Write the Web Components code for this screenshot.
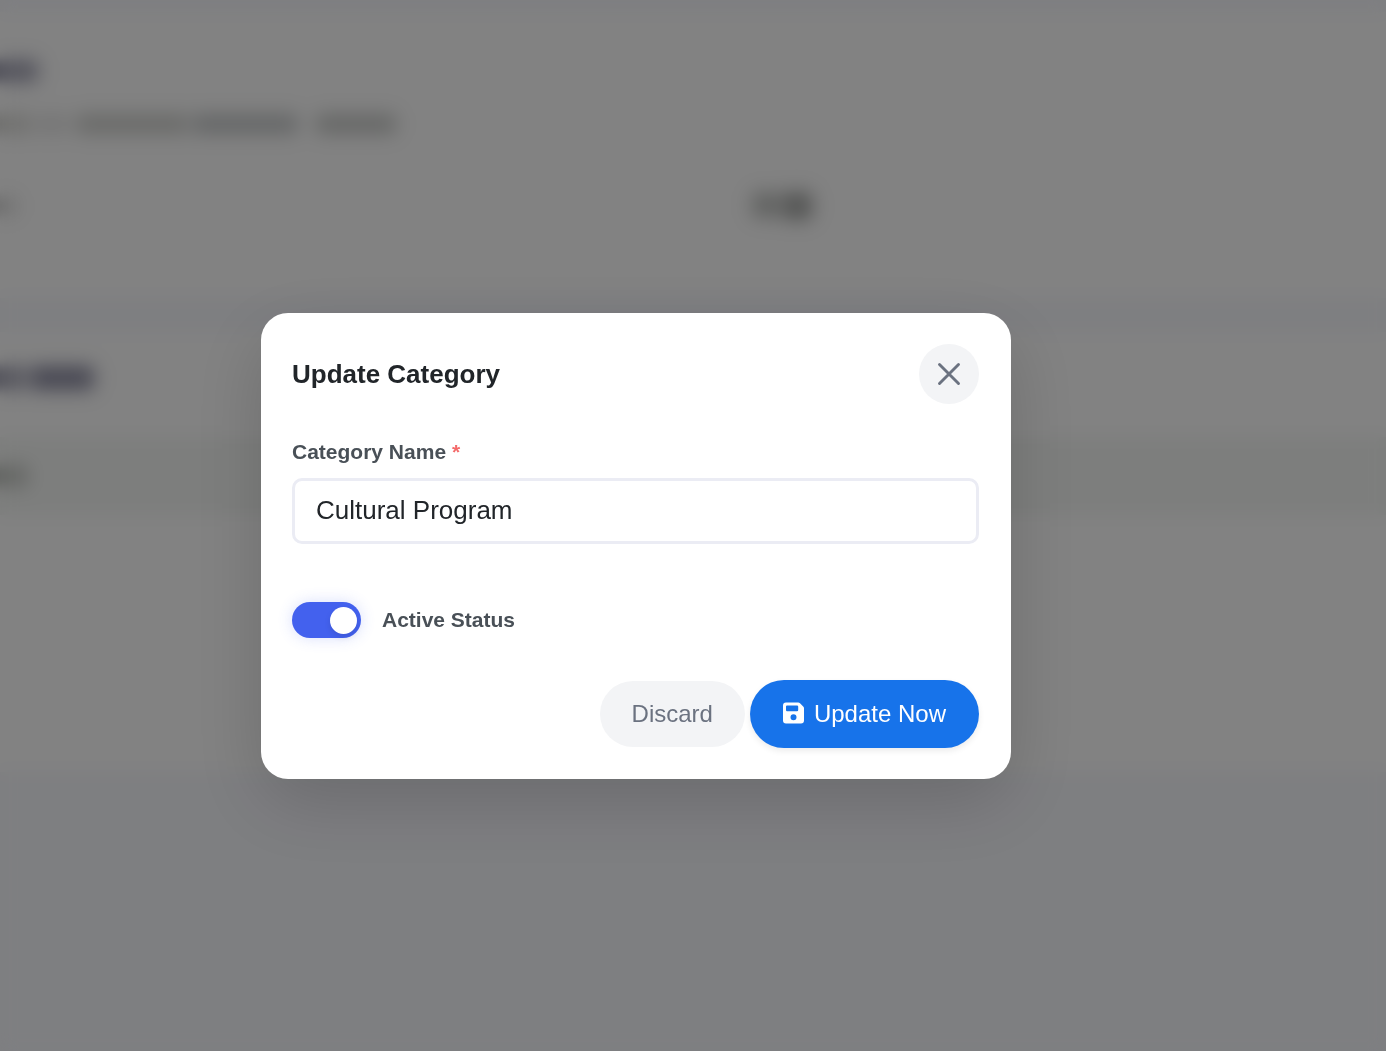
<!DOCTYPE html>
<html lang="en">
<head>
<meta charset="utf-8">
<meta name="viewport" content="width=device-width, initial-scale=1">
<title>Update Category</title>
<style>
  body { margin: 0; min-height: 100vh; background: #f8f9fe; font-family: "Liberation Sans", Arial, sans-serif; color: #212529; }
</style>
</head>
<body>
<category-page></category-page>
<modal-overlay>
  <modal-dialog heading="Update Category">
    <text-field label="Category Name" value="Cultural Program" required></text-field>
    <toggle-switch label="Active Status" checked></toggle-switch>
    <pill-button slot="actions">Discard</pill-button>
    <pill-button slot="actions" variant="primary"><save-icon slot="icon"></save-icon>Update Now</pill-button>
  </modal-dialog>
</modal-overlay>
<script>
class BaseElement extends HTMLElement {
  constructor() { super(); this.attachShadow({ mode: "open" }); }
  connectedCallback() {
    this.shadowRoot.innerHTML = "<style>*{box-sizing:border-box}" + this.css() + "</style>" + this.html();
  }
  css() { return ""; }
  html() { return ""; }
}

/* Placeholder panels of the page under the dialog */
customElements.define("category-page", class extends BaseElement {
  css() { return `
    :host { display: flex; flex-direction: column; gap: 34px; padding-top: 12px; overflow-x: clip; }
    section { background: #fff; display: flex; flex-direction: column; }
    i { display: block; border-radius: 4px; filter: blur(6px); }
    .title, .words, .name, .fields > i, .row > i { margin-left: -20px; }
    .form { height: 286px; padding-top: 48px; gap: 42px; }
    .title { width: 58px; height: 22px; background: #a2a2b4; }
    .words { display: flex; gap: 4px; margin-top: -10px; }
    .words i { height: 20px; background: #d0d1d0; }
    .words i:nth-child(1) { width: 52px; background: #dcdcd9; }
    .words i:nth-child(2) { width: 32px; background: #e6e6e6; }
    .words i:nth-child(3) { width: 112px; margin-left: 4px; background: #cfd0cd; }
    .words i:nth-child(4) { width: 106px; background: #c6c9ca; }
    .words i:nth-child(5) { width: 80px; margin-left: 14px; background: #c8cac8; }
    .fields { display: grid; grid-template-columns: 54% 46%; align-items: center; margin-top: 16px; }
    .fields i { width: 36px; height: 18px; background: #dadada; }
    .fields div { display: flex; gap: 2px; padding-left: 4px; }
    .fields div i { width: 28px; height: 26px; background: #c0c2c0; }
    .fields div i + i { width: 30px; height: 28px; background: #a4a6a4; }
    .list { height: 440px; padding-top: 34px; }
    .name { display: flex; gap: 4px; margin-bottom: 47px; }
    .name i { height: 24px; width: 46px; background: #a8a8b8; }
    .name i + i { width: 64px; background: #8c8ca2; }
    .row { height: 78px; background: #f6f8f6; display: flex; align-items: center; }
    .row i { width: 48px; height: 22px; background: #c6c9c5; }
  `; }
  html() { return `
    <section class="form" aria-hidden="true">
      <i class="title"></i>
      <div class="words"><i></i><i></i><i></i><i></i><i></i></div>
      <div class="fields"><i></i><div><i></i><i></i></div></div>
    </section>
    <section class="list" aria-hidden="true">
      <div class="name"><i></i><i></i></div>
      <div class="row"><i></i></div>
    </section>`; }
});

customElements.define("modal-overlay", class extends BaseElement {
  css() { return `
    :host { position: fixed; inset: 0; display: flex; align-items: center; justify-content: center;
      box-sizing: border-box; padding: 41px 114px 0 0;
      background: rgba(0,0,0,.49); backdrop-filter: blur(8px); }
  `; }
  html() { return `<slot></slot>`; }
});

customElements.define("modal-dialog", class extends BaseElement {
  css() { return `
    :host { display: block; width: 750px; max-width: 100%; box-sizing: border-box; }
    .panel { background: #fff; border-radius: 27px; padding: 31px 32px 31px 31px;
      box-shadow: 0 24px 72px rgba(0,0,0,.17); }
    header { display: flex; align-items: center; justify-content: space-between; margin-bottom: 36px; }
    h2 { margin: 0; font-size: 26px; line-height: 32px; font-weight: 700; color: #212529; }
    button { width: 60px; height: 60px; border: 0; border-radius: 50%; padding: 0; background: #f3f4f6;
      color: #6b7280; display: flex; align-items: center; justify-content: center; }
    .body { display: flex; flex-direction: column; gap: 58px; }
    footer { display: flex; align-items: center; justify-content: flex-end; gap: 5px; margin-top: 42px; }
  `; }
  html() { return `
    <div class="panel" role="dialog" aria-modal="true" aria-labelledby="title">
      <header>
        <h2 id="title">${this.getAttribute("heading")}</h2>
        <button type="button" aria-label="Close">
          <svg width="24" height="24" viewBox="0 0 24 24" fill="none" stroke="currentColor" stroke-width="2.9" stroke-linecap="round"><path d="M2.5 2.5 21.5 21.5M21.5 2.5 2.5 21.5"/></svg>
        </button>
      </header>
      <div class="body"><slot></slot></div>
      <footer><slot name="actions"></slot></footer>
    </div>`; }
});

customElements.define("text-field", class extends BaseElement {
  css() { return `
    :host { display: flex; flex-direction: column; gap: 14px; }
    label { font-size: 21px; line-height: 24px; font-weight: 700; color: #495057; }
    span { color: #f46a6a; }
    input { width: 100%; height: 66px; border: 3px solid #ebecf4; border-radius: 10px; padding: 0 21px 2px;
      font: 26px/32px "Liberation Sans", Arial, sans-serif; color: #212529; background: #fff; outline: 0; }
  `; }
  html() { return `
    <label for="field">${this.getAttribute("label")} <span>*</span></label>
    <input id="field" type="text" required value="${this.getAttribute("value")}">`; }
});

customElements.define("toggle-switch", class extends BaseElement {
  css() { return `
    :host { display: flex; align-items: center; gap: 21px; }
    input { appearance: none; margin: 0; width: 69px; height: 36px; border-radius: 18px; padding: 0 4px;
      display: flex; align-items: center; background: #ccd0d8; }
    input::before { content: ""; width: 27px; height: 27px; border-radius: 50%; background: #fff;
      box-shadow: 0 3px 6px rgba(0,0,0,.1); }
    input:checked { background: #4361ee; justify-content: flex-end; box-shadow: 0 0 15px rgba(67,97,238,.2); }
    label { font-size: 21px; line-height: 24px; font-weight: 700; color: #495057; }
  `; }
  html() { return `
    <input id="toggle" type="checkbox" role="switch" ${this.hasAttribute("checked") ? "checked" : ""}>
    <label for="toggle">${this.getAttribute("label")}</label>`; }
});

customElements.define("pill-button", class extends BaseElement {
  css() { return `
    :host { display: block; }
    button { display: flex; align-items: center; gap: 10px; height: 66px; padding: 0 32px; border: 0; border-radius: 34px;
      font: 24px/28px "Liberation Sans", Arial, sans-serif; background: #f3f4f6; color: #6b7280; white-space: nowrap; }
    :host([variant="primary"]) button { height: 68px; padding: 0 33px; background: #1773ea; color: #fff;
      box-shadow: 0 3px 6px rgba(0,0,0,.08); }
  `; }
  html() { return `<button type="button"><slot name="icon"></slot><span><slot></slot></span></button>`; }
});

customElements.define("save-icon", class extends BaseElement {
  css() { return `
    :host { display: block; height: 22px; margin-bottom: 2px; }
    svg { display: block; }
  `; }
  html() { return `<svg width="21" height="22" viewBox="0 0 21 22" fill="currentColor" aria-hidden="true"><path fill-rule="evenodd" d="M3 .5H15.2Q16.2.5 17 1.3L20.2 4.5Q21 5.3 21 6.3V18.5Q21 21.5 18 21.5H3Q0 21.5 0 18.5V3.5Q0 .5 3 .5ZM4 3.5Q3 3.5 3 4.500V8Q3 9.200 4 9.200H14Q15.200 9.200 15.200 8V4.500Q15.200 3.500 14 3.500ZM10.500 12.200A3 3 0 1 0 10.500 18.200A3 3 0 1 0 10.500 12.200Z"/></svg>`; }
});
</script>
</body>
</html>
